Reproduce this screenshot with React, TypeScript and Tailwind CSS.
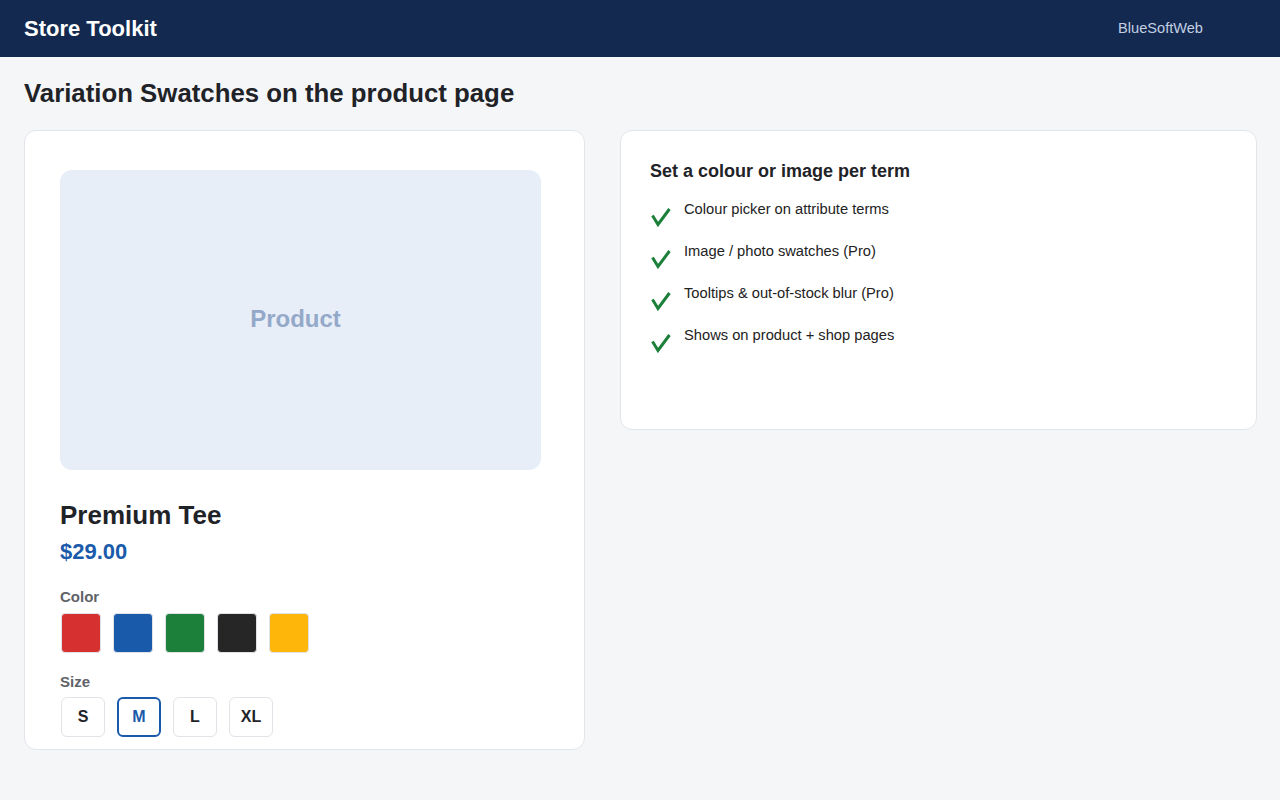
const swatches = ["#d63031", "#1a5aab", "#1c7f3a", "#262626", "#ffb60a"];
const sizes = ["S", "M", "L", "XL"];
const features = [
  "Colour picker on attribute terms",
  "Image / photo swatches (Pro)",
  "Tooltips & out-of-stock blur (Pro)",
  "Shows on product + shop pages",
];

const Check = () => (
  <svg width="22" height="22" viewBox="0 0 22 22" className="mt-[7px] shrink-0">
    <path d="M2.5 10.5 L8 19.5 L19.5 4" fill="none" stroke="#1c7f3a" strokeWidth="3" strokeLinejoin="miter" />
  </svg>
);

export default function App() {
  return (
    <div className="min-h-screen w-full bg-[#f5f6f8] font-['Liberation_Sans',Arial,sans-serif] text-[#1f2328]">
      <header className="flex h-[57px] items-center justify-between bg-[#13294f] pl-6 pr-[77px]">
        <div className="text-[22px] font-bold text-white">Store Toolkit</div>
        <div className="text-[14.6px] text-[#c3cfe3]">BlueSoftWeb</div>
      </header>

      <main className="pl-6 pr-[23px] pt-[20px]">
        <h1 className="text-[25.8px] font-bold leading-[32px] text-[#1f2328]">
          Variation Swatches on the product page
        </h1>

        <div className="mt-[21px] grid grid-cols-[561px_1fr] items-start gap-[35px]">
          {/* product card */}
          <div className="h-[620px] rounded-xl border border-[#e2e5ea] bg-white pl-[35px] pt-[39px]">
            <div className="flex h-[300px] w-[481px] items-center justify-center rounded-xl bg-[#e8eef7] pb-[2px] pr-[10px]">
              <span className="text-[24px] font-bold text-[#94a9c9]">Product</span>
            </div>

            <div className="mt-[28px] text-[26px] font-bold leading-[34px] text-[#1f2328]">Premium Tee</div>
            <div className="mt-[6px] text-[22px] font-bold leading-[28px] text-[#1a5aab]">$29.00</div>

            <div className="mt-[22px] text-[15px] font-bold leading-[18px] text-[#5f6368]">Color</div>
            <div className="mt-[7px] flex gap-3 pl-px">
              {swatches.map((c) => (
                <div
                  key={c}
                  className="h-10 w-10 rounded-[4px] border border-[#dfe3e8]"
                  style={{ backgroundColor: c }}
                />
              ))}
            </div>

            <div className="mt-[20px] text-[15px] font-bold leading-[18px] text-[#5f6368]">Size</div>
            <div className="mt-[6px] flex gap-3 pl-px">
              {sizes.map((s) => (
                <div
                  key={s}
                  className={
                    s === "M"
                      ? "flex h-10 w-11 items-center justify-center rounded-[6px] border-2 border-[#1a5aab] text-[16px] font-bold text-[#1a5aab]"
                      : "flex h-10 w-11 items-center justify-center rounded-[6px] border border-[#e0e3e8] text-[16px] font-bold text-[#1f2328]"
                  }
                >
                  {s}
                </div>
              ))}
            </div>
          </div>

          {/* feature card */}
          <div className="h-[300px] rounded-xl border border-[#e2e5ea] bg-white px-[29px] pt-[29px]">
            <div className="text-[18px] font-bold leading-[22px] text-[#1f2328]">Set a colour or image per term</div>
            <ul className="mt-[16px] flex flex-col gap-[20px]">
              {features.map((f) => (
                <li key={f} className="flex h-[22px] items-start gap-[12px]">
                  <Check />
                  <span className="text-[14.7px] leading-[22px] text-[#222]">{f}</span>
                </li>
              ))}
            </ul>
          </div>
        </div>
      </main>
    </div>
  );
}
